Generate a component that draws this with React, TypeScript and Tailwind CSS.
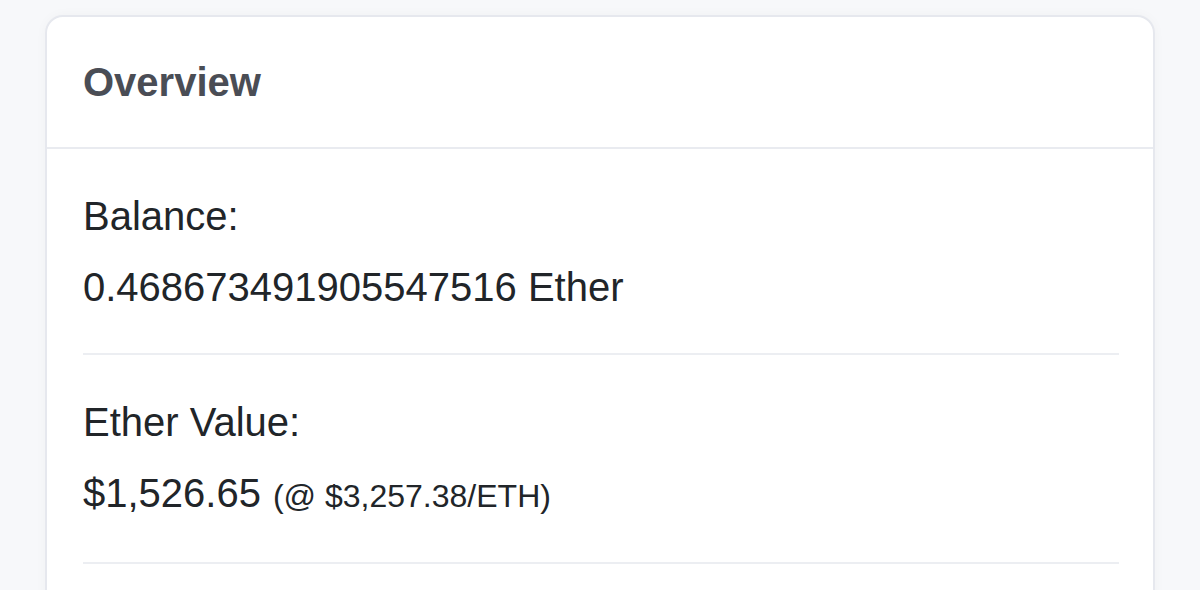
import React from "react";

const rows = [
  { label: "Balance:", value: "0.468673491905547516 Ether" },
  { label: "Ether Value:", value: "$1,526.65", extra: "(@ $3,257.38/ETH)" },
];

export default function App() {
  return (
    <div
      className="h-[590px] overflow-hidden bg-[#f7f8fa] pt-[15px] pl-[45px]"
      style={{ fontFamily: '"Liberation Sans", Arial, sans-serif' }}
    >
      <div className="w-[1110px] rounded-[18px] border-2 border-[#e6e8ee] bg-white shadow-[0_0_12px_rgba(0,0,0,0.03)]">
        <div className="flex h-[132px] items-center border-b-2 border-[#e9ebf0] pl-[36px]">
          <h2 className="text-[40px] font-bold leading-[48px] text-[#4a4d55]">Overview</h2>
        </div>
        <div className="pl-[36px] pr-[34px] pb-[80px]">
          {rows.map((row, i) => (
            <div key={i} className="border-b-2 border-[#eceef2] pt-[43px] pb-[42px] text-[#212529]">
              <div className="text-[40px] leading-[48px]">{row.label}</div>
              <div className="mt-[23px] text-[40px] leading-[48px]">
                {row.value}
                {row.extra && <span className="ml-[12px] text-[32px]">{row.extra}</span>}
              </div>
            </div>
          ))}
        </div>
      </div>
    </div>
  );
}
